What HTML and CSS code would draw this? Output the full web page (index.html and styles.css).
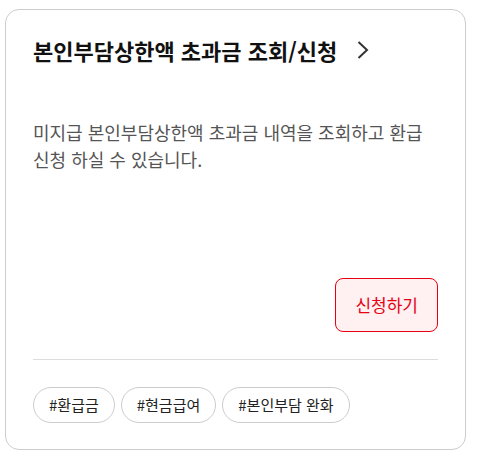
FILE: index.html
```html
<!DOCTYPE html>
<html lang="ko">

<head>
    <meta charset="UTF-8">
    <meta name="viewport" content="width=device-width, initial-scale=1.0">
    <title>본인부담상한액 초과금 조회/신청</title>
    <link rel="stylesheet" href="styles.css">
</head>

<body>
    <div class="card">
        <a href="#" class="card-title">
            <span>본인부담상한액 초과금 조회/신청</span>
            <svg class="chevron" width="12" height="20" viewBox="0 0 12 20" aria-hidden="true">
                <path d="M1.5 2 L10 10 L1.5 18" fill="none" stroke="#333" stroke-width="2" />
            </svg>
        </a>
        <p class="card-desc">미지급 본인부담상한액 초과금 내역을 조회하고 환급 신청 하실 수 있습니다.</p>
        <div class="card-action">
            <a href="#" class="apply-button">신청하기</a>
        </div>
        <div class="tags">
            <span class="tag">#환급금</span>
            <span class="tag">#현금급여</span>
            <span class="tag">#본인부담 완화</span>
        </div>
    </div>
</body>

</html>
```

FILE: styles.css
```css
body {
    font-family: "Noto Sans CJK KR", "Noto Sans", sans-serif;
    background-color: #fff;
    margin: 9px 0 0 5px;
    padding: 0;
}

.card {
    width: 461px;
    height: 441px;
    box-sizing: border-box;
    border: 1px solid #cccccc;
    border-radius: 14px;
    padding: 27px 27px 26px;
    display: flex;
    flex-direction: column;
}

.card-title {
    display: flex;
    align-items: center;
    gap: 20px;
    font-size: 22px;
    font-weight: 700;
    line-height: 26px;
    color: #111;
    text-decoration: none;
}

.chevron {
    flex-shrink: 0;
}

.card-desc {
    margin: 56px 0 0;
    font-size: 18px;
    line-height: 27px;
    color: #555;
}

.card-action {
    margin-top: auto;
    display: flex;
    justify-content: flex-end;
    padding-bottom: 27px;
    border-bottom: 1px solid #dddddd;
}

.apply-button {
    display: block;
    padding: 14px 19px;
    font-size: 17px;
    line-height: 24px;
    color: #e60012;
    background-color: #fff0f1;
    border: 1px solid #e60012;
    border-radius: 8px;
    text-decoration: none;
}

.tags {
    display: flex;
    gap: 6px;
    margin-top: 27px;
}

.tag {
    display: inline-block;
    padding: 5px 15px;
    font-size: 15px;
    line-height: 24px;
    color: #222;
    border: 1px solid #cccccc;
    border-radius: 18px;
}
```
